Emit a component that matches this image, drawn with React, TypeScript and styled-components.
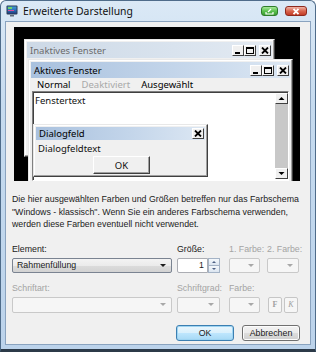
import React from "react";
import styled, { createGlobalStyle } from "styled-components";

const GlobalStyle = createGlobalStyle`
  html, body {
    margin: 0;
    padding: 0;
    background: #ffffff;
  }
  body {
    font-family: "Liberation Sans", Arial, sans-serif;
    color: #1b1b1b;
  }
`;

const Window = styled.div`
  width: 316px;
  height: 352px;
  box-sizing: border-box;
  border: 1px solid #4f6c8a;
  border-bottom: 3px solid #2c3a48;
  border-radius: 6px 6px 0 0;
  background: linear-gradient(180deg, #dbe9f6 0%, #c6dbef 30%, #bcd3eb 100%);
  display: flex;
  flex-direction: column;
`;

const TitleBar = styled.div`
  height: 20px;
  display: flex;
  align-items: center;
  padding: 0 8px 0 5px;
`;

const TitleText = styled.span`
  margin-left: 5px;
  font-family: "Noto Sans", "Open Sans", sans-serif;
  font-size: 10.4px;
  color: #101010;
  flex: 1;
`;

const CaptionBtn = styled.div<{ $red?: boolean }>`
  width: ${(p) => (p.$red ? 22 : 17)}px;
  height: 10px;
  margin-left: ${(p) => (p.$red ? 7 : 0)}px;
  border-radius: 3px;
  border: 1px solid ${(p) => (p.$red ? "#8e2a1e" : "#2f7d2a")};
  box-sizing: border-box;
  background: ${(p) =>
    p.$red
      ? "linear-gradient(180deg, #efb4a6 0%, #d9664f 50%, #c23c27 100%)"
      : "linear-gradient(180deg, #a9e89b 0%, #5cc24f 50%, #3b9d32 100%)"};
  display: flex;
  align-items: center;
  justify-content: center;
`;

const Body = styled.div`
  flex: 1;
  margin: 0 4px 4px 4px;
  background: #f0f0f0;
  border: 1px solid #8aa3bf;
  padding: 5px 10px 0 6px;
  display: flex;
  flex-direction: column;
`;

const Preview = styled.div`
  position: relative;
  height: 154px;
  margin-left: 2px;
  background: #000;
  box-sizing: border-box;
  padding: 12px 0 0 10px;
  overflow: hidden;
  font-family: "Noto Sans", "Open Sans", sans-serif;
  font-size: 9.5px;
  color: #111;
`;

const MiniWin = styled.div<{ $w: number; $h: number }>`
  width: ${(p) => p.$w}px;
  height: ${(p) => p.$h}px;
  box-sizing: border-box;
  background: #f0f0f0;
  border: 1px solid;
  border-color: #e8e8e8 #404040 #404040 #e8e8e8;
  box-shadow: inset -1px -1px 0 #a0a0a0, inset 1px 1px 0 #ffffff;
  padding: 2px;
  display: flex;
  flex-direction: column;
`;

const Overlay = styled.div<{ $left: number; $top: number }>`
  position: absolute;
  left: ${(p) => p.$left}px;
  top: ${(p) => p.$top}px;
`;

const MiniTitle = styled.div<{ $active?: boolean; $h?: number }>`
  height: ${(p) => p.$h ?? 16}px;
  flex: none;
  display: flex;
  align-items: center;
  padding: 0 1px 0 3px;
  background: ${(p) =>
    p.$active
      ? "linear-gradient(90deg, #a9c1de 0%, #c3d5ea 55%, #dce7f3 100%)"
      : "linear-gradient(90deg, #cdd9e6 0%, #d9e3ee 60%, #e3eaf2 100%)"};
  color: ${(p) => (p.$active ? "#000" : "#6a6a6a")};
`;

const MiniTitleText = styled.span`
  flex: 1;
  white-space: nowrap;
`;

const MiniBtn = styled.div<{ $gap?: boolean }>`
  width: 12px;
  height: 11px;
  box-sizing: border-box;
  margin-left: ${(p) => (p.$gap ? 3 : 0)}px;
  background: #f0f0f0;
  border: 1px solid;
  border-color: #ffffff #404040 #404040 #ffffff;
  display: flex;
  align-items: center;
  justify-content: center;
`;

const MenuRow = styled.div`
  height: 13px;
  display: flex;
  align-items: center;
  gap: 11px;
  padding-left: 6px;
`;

const MenuItem = styled.span<{ $disabled?: boolean }>`
  color: ${(p) => (p.$disabled ? "#a8a8a8" : "#000")};
`;

const TextArea = styled.div`
  flex: 1;
  margin: 0 1px 1px 1px;
  background: #fff;
  border: 1px solid;
  border-color: #808080 #ffffff #ffffff #808080;
  box-shadow: inset 1px 1px 0 #404040;
  display: flex;
`;

const TextAreaContent = styled.div`
  flex: 1;
  padding: 2px 2px;
`;

const ScrollBar = styled.div`
  width: 13px;
  display: flex;
  flex-direction: column;
  background: #c8c8c8;
  margin: 1px 0 1px 0;
`;

const ScrollArrow = styled.div`
  height: 11px;
  box-sizing: border-box;
  background: #f0f0f0;
  border: 1px solid;
  border-color: #ffffff #404040 #404040 #ffffff;
  display: flex;
  align-items: center;
  justify-content: center;
`;

const ScrollTrack = styled.div`
  flex: 1;
`;

const DialogBody = styled.div`
  flex: 1;
  display: flex;
  flex-direction: column;
  padding: 2px 0 0 2px;
  line-height: 13px;
`;

const PreviewButton = styled.div`
  align-self: center;
  margin-top: 1px;
  width: 57px;
  height: 18px;
  box-sizing: border-box;
  background: #f0f0f0;
  border: 1px solid;
  border-color: #ffffff #404040 #404040 #ffffff;
  box-shadow: inset -1px -1px 0 #a0a0a0;
  display: flex;
  align-items: center;
  justify-content: center;
`;

const Description = styled.p`
  margin: 12px 0 0 0;
  font-size: 8.8px;
  line-height: 12.5px;
  color: #1b1b1b;
`;

const FormGrid = styled.div`
  margin-top: 12px;
  display: grid;
  grid-template-columns: 165px 52px 38px 33px;
  row-gap: 9px;
`;

const Field = styled.div`
  display: flex;
  flex-direction: column;
  gap: 3px;
`;

const Label = styled.span<{ $disabled?: boolean }>`
  height: 12px;
  line-height: 12px;
  font-size: 8.8px;
  white-space: nowrap;
  color: ${(p) => (p.$disabled ? "#a4a4a4" : "#1b1b1b")};
`;

const Combo = styled.div<{ $w: number; $disabled?: boolean; $h?: number }>`
  width: ${(p) => p.$w}px;
  height: ${(p) => p.$h ?? 15}px;
  box-sizing: border-box;
  border: 1px solid ${(p) => (p.$disabled ? "#c9c9c9" : "#7a8391")};
  border-radius: 2px;
  background: ${(p) =>
    p.$disabled
      ? "#f6f6f6"
      : "linear-gradient(180deg, #f3f3f3 0%, #ebebeb 50%, #dcdcdc 51%, #d2d2d2 100%)"};
  display: flex;
  align-items: center;
  padding: 0 5px 0 4px;
  font-size: 8.8px;
  color: #1b1b1b;
`;

const ComboText = styled.span`
  flex: 1;
  white-space: nowrap;
`;

const Arrow = styled.span<{ $disabled?: boolean }>`
  width: 0;
  height: 0;
  border-left: 3px solid transparent;
  border-right: 3px solid transparent;
  border-top: 3px solid ${(p) => (p.$disabled ? "#a8a8a8" : "#1b1b1b")};
`;

const Spin = styled.div`
  display: flex;
  width: 43px;
  height: 15px;
`;

const SpinInput = styled.div`
  width: 31px;
  box-sizing: border-box;
  background: #fff;
  border: 1px solid #abadb3;
  border-radius: 2px 0 0 2px;
  text-align: right;
  padding-right: 3px;
  font-size: 8.8px;
  line-height: 13px;
`;

const SpinButtons = styled.div`
  width: 12px;
  display: flex;
  flex-direction: column;
`;

const SpinPart = styled.div<{ $up?: boolean }>`
  flex: 1;
  box-sizing: border-box;
  border: 1px solid #a4b3c6;
  border-top-width: ${(p) => (p.$up ? 1 : 0)}px;
  background: linear-gradient(180deg, #f4f8fc, #dbe5f0);
  display: flex;
  align-items: center;
  justify-content: center;
`;

const SpinTri = styled.span<{ $up?: boolean }>`
  width: 0;
  height: 0;
  border-left: 2px solid transparent;
  border-right: 2px solid transparent;
  ${(p) => (p.$up ? "border-bottom" : "border-top")}: 2px solid #4d6185;
`;

const StyleButtons = styled.div`
  display: flex;
  gap: 2px;
  padding-left: 1px;
`;

const StyleBtn = styled.div<{ $italic?: boolean }>`
  width: 14px;
  height: 16px;
  box-sizing: border-box;
  border: 1px solid #c6c6c6;
  border-radius: 2px;
  background: #f6f6f6;
  color: #a0a0a0;
  font-size: 8px;
  font-weight: ${(p) => (p.$italic ? 400 : 700)};
  font-style: ${(p) => (p.$italic ? "italic" : "normal")};
  font-family: "Liberation Serif", serif;
  display: flex;
  align-items: center;
  justify-content: center;
`;

const ButtonRow = styled.div`
  margin-top: 12px;
  display: flex;
  justify-content: flex-end;
  gap: 8px;
`;

const DialogButton = styled.button<{ $default?: boolean }>`
  width: 58px;
  height: 16px;
  padding: 0;
  box-sizing: border-box;
  border-radius: 3px;
  font-family: "Liberation Sans", Arial, sans-serif;
  font-size: 8.8px;
  color: #1b1b1b;
  border: 1px solid ${(p) => (p.$default ? "#3c7fb1" : "#707070")};
  background: ${(p) =>
    p.$default
      ? "linear-gradient(180deg, #eaf6fd 0%, #d9f0fc 50%, #bee6fd 51%, #a7d9f5 100%)"
      : "linear-gradient(180deg, #f2f2f2 0%, #ebebeb 50%, #dddddd 51%, #cfcfcf 100%)"};
  box-shadow: ${(p) => (p.$default ? "inset 0 0 0 1px #9ed4f2" : "inset 0 0 0 1px #fcfcfc")};
`;

const MinGlyph = () => (
  <svg width="8" height="7" viewBox="0 0 8 7">
    <rect x="1" y="5" width="5" height="2" fill="#000" />
  </svg>
);

const MaxGlyph = () => (
  <svg width="8" height="7" viewBox="0 0 8 7">
    <rect x="0.5" y="0.5" width="7" height="6" fill="none" stroke="#000" />
    <rect x="0" y="0" width="8" height="2" fill="#000" />
  </svg>
);

const CloseGlyph = () => (
  <svg width="8" height="7" viewBox="0 0 8 7">
    <path d="M1 0.5 L7 6.5 M7 0.5 L1 6.5" stroke="#000" strokeWidth="1.8" />
  </svg>
);

const ArrowGlyph = ({ up }: { up?: boolean }) => (
  <svg width="7" height="5" viewBox="0 0 7 5">
    <path d={up ? "M0.5 4 L3.5 1 L6.5 4 Z" : "M0.5 1 L3.5 4 L6.5 1 Z"} fill="#000" />
  </svg>
);

const AppIcon = () => (
  <svg width="12" height="12" viewBox="0 0 12 12">
    <defs>
      <linearGradient id="scr" x1="0" y1="0" x2="0" y2="1">
        <stop offset="0" stopColor="#3f9ed8" />
        <stop offset="0.5" stopColor="#2f6fb8" />
        <stop offset="1" stopColor="#1d3f82" />
      </linearGradient>
    </defs>
    <rect x="0.5" y="0.5" width="11" height="9" rx="1" fill="#2b3b55" />
    <rect x="1.5" y="1.5" width="9" height="7" fill="url(#scr)" />
    <rect x="2" y="2" width="4" height="2" fill="#6fd36a" />
    <rect x="2" y="5" width="6" height="1" fill="#d94f9a" />
    <rect x="4" y="10" width="4" height="1.5" fill="#5f6b7a" />
  </svg>
);

const CaptionGlyphGreen = () => (
  <svg width="9" height="7" viewBox="0 0 9 7">
    <path d="M1 4 L1 6 L8 6 L8 4" fill="none" stroke="#fff" strokeWidth="1.2" />
    <path d="M3 4 L6 1" stroke="#fff" strokeWidth="1.2" />
  </svg>
);

const CaptionGlyphRed = () => (
  <svg width="8" height="7" viewBox="0 0 8 7">
    <path d="M1.5 0.8 L6.5 6.2 M6.5 0.8 L1.5 6.2" stroke="#fff" strokeWidth="1.8" />
  </svg>
);

const App: React.FC = () => {
  return (
    <>
      <GlobalStyle />
      <Window>
        <TitleBar>
          <AppIcon />
          <TitleText>Erweiterte Darstellung</TitleText>
          <CaptionBtn>
            <CaptionGlyphGreen />
          </CaptionBtn>
          <CaptionBtn $red>
            <CaptionGlyphRed />
          </CaptionBtn>
        </TitleBar>

        <Body>
          <Preview>
            <MiniWin $w={251} $h={118}>
              <MiniTitle>
                <MiniTitleText>Inaktives Fenster</MiniTitleText>
                <MiniBtn><MinGlyph /></MiniBtn>
                <MiniBtn><MaxGlyph /></MiniBtn>
                <MiniBtn $gap><CloseGlyph /></MiniBtn>
              </MiniTitle>
            </MiniWin>

            <Overlay $left={14} $top={32}>
              <MiniWin $w={265} $h={126}>
                <MiniTitle $active>
                  <MiniTitleText>Aktives Fenster</MiniTitleText>
                  <MiniBtn><MinGlyph /></MiniBtn>
                  <MiniBtn><MaxGlyph /></MiniBtn>
                  <MiniBtn $gap><CloseGlyph /></MiniBtn>
                </MiniTitle>
                <MenuRow>
                  <MenuItem>Normal</MenuItem>
                  <MenuItem $disabled>Deaktiviert</MenuItem>
                  <MenuItem>Ausgewählt</MenuItem>
                </MenuRow>
                <TextArea>
                  <TextAreaContent>Fenstertext</TextAreaContent>
                  <ScrollBar>
                    <ScrollArrow><ArrowGlyph up /></ScrollArrow>
                    <ScrollTrack />
                    <ScrollArrow><ArrowGlyph /></ScrollArrow>
                  </ScrollBar>
                </TextArea>
              </MiniWin>
            </Overlay>

            <Overlay $left={19} $top={97}>
              <MiniWin $w={175} $h={53}>
                <MiniTitle $active $h={13}>
                  <MiniTitleText>Dialogfeld</MiniTitleText>
                  <MiniBtn><CloseGlyph /></MiniBtn>
                </MiniTitle>
                <DialogBody>
                  <span>Dialogfeldtext</span>
                  <PreviewButton>OK</PreviewButton>
                </DialogBody>
              </MiniWin>
            </Overlay>
          </Preview>

          <Description>
            Die hier ausgewählten Farben und Größen betreffen nur das Farbschema
            "Windows - klassisch". Wenn Sie ein anderes Farbschema verwenden,
            werden diese Farben eventuell nicht verwendet.
          </Description>

          <FormGrid>
            <Field>
              <Label>Element:</Label>
              <Combo $w={160}>
                <ComboText>Rahmenfüllung</ComboText>
                <Arrow />
              </Combo>
            </Field>
            <Field>
              <Label>Größe:</Label>
              <Spin>
                <SpinInput>1</SpinInput>
                <SpinButtons>
                  <SpinPart $up><SpinTri $up /></SpinPart>
                  <SpinPart><SpinTri /></SpinPart>
                </SpinButtons>
              </Spin>
            </Field>
            <Field>
              <Label $disabled>1. Farbe:</Label>
              <Combo $w={31} $disabled>
                <ComboText />
                <Arrow $disabled />
              </Combo>
            </Field>
            <Field>
              <Label $disabled>2. Farbe:</Label>
              <Combo $w={32} $disabled>
                <ComboText />
                <Arrow $disabled />
              </Combo>
            </Field>

            <Field>
              <Label $disabled>Schriftart:</Label>
              <Combo $w={160} $h={16} $disabled>
                <ComboText />
                <Arrow $disabled />
              </Combo>
            </Field>
            <Field>
              <Label $disabled>Schriftgrad:</Label>
              <Combo $w={43} $h={16} $disabled>
                <ComboText />
                <Arrow $disabled />
              </Combo>
            </Field>
            <Field>
              <Label $disabled>Farbe:</Label>
              <Combo $w={31} $h={16} $disabled>
                <ComboText />
                <Arrow $disabled />
              </Combo>
            </Field>
            <Field>
              <Label />
              <StyleButtons>
                <StyleBtn>F</StyleBtn>
                <StyleBtn $italic>K</StyleBtn>
              </StyleButtons>
            </Field>
          </FormGrid>

          <ButtonRow>
            <DialogButton $default>OK</DialogButton>
            <DialogButton>Abbrechen</DialogButton>
          </ButtonRow>
        </Body>
      </Window>
    </>
  );
};

export default App;
